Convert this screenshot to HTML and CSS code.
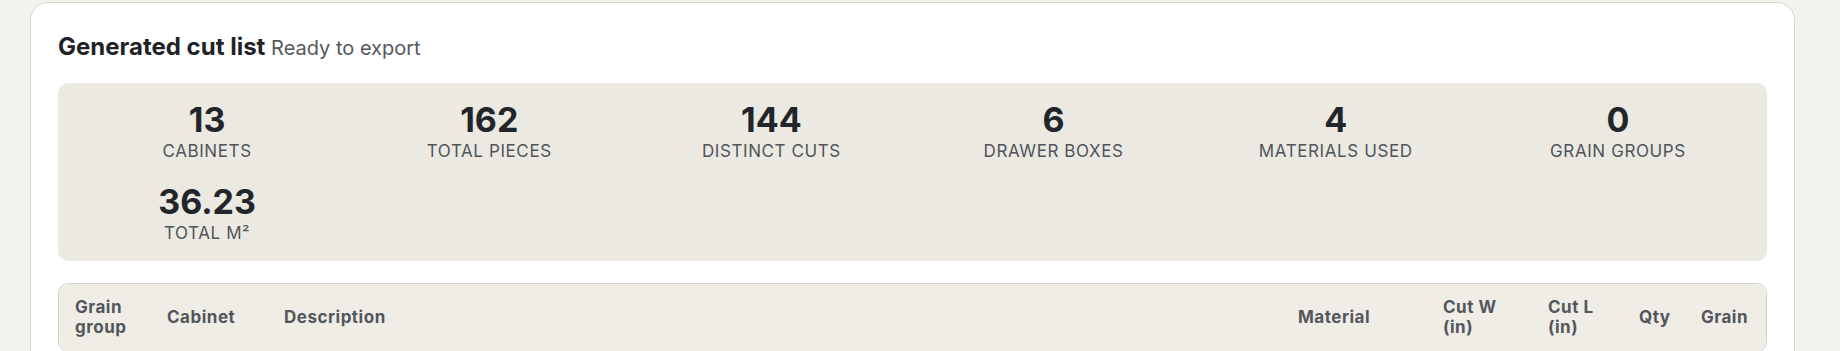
FILE: index.html
```html
<!DOCTYPE html>
<html lang="en">
<head>
    <meta charset="UTF-8">
    <meta name="viewport" content="width=device-width, initial-scale=1.0">
    <title>Cut List</title>
    <link rel="stylesheet" href="styles.css">
</head>
<body>
    <div class="page">
        <section class="card">
            <h2 class="card-title">Generated cut list <span class="subtitle">Ready to export</span></h2>

            <div class="stats">
                <div class="stat"><div class="stat-value">13</div><div class="stat-label">Cabinets</div></div>
                <div class="stat"><div class="stat-value">162</div><div class="stat-label">Total pieces</div></div>
                <div class="stat"><div class="stat-value">144</div><div class="stat-label">Distinct cuts</div></div>
                <div class="stat"><div class="stat-value">6</div><div class="stat-label">Drawer boxes</div></div>
                <div class="stat"><div class="stat-value">4</div><div class="stat-label">Materials used</div></div>
                <div class="stat"><div class="stat-value">0</div><div class="stat-label">Grain groups</div></div>
                <div class="stat"><div class="stat-value">36.23</div><div class="stat-label">Total m²</div></div>
            </div>

            <div class="table-wrap">
                <table class="cut-table">
                    <colgroup>
                        <col class="c-group">
                        <col class="c-cab">
                        <col class="c-desc">
                        <col class="c-mat">
                        <col class="c-w">
                        <col class="c-l">
                        <col class="c-qty">
                        <col class="c-grain">
                    </colgroup>
                    <thead>
                        <tr>
                            <th>Grain group</th>
                            <th>Cabinet</th>
                            <th>Description</th>
                            <th>Material</th>
                            <th>Cut W (in)</th>
                            <th>Cut L (in)</th>
                            <th>Qty</th>
                            <th>Grain</th>
                        </tr>
                    </thead>
                    <tbody></tbody>
                </table>
            </div>
        </section>
    </div>
</body>
</html>
```

FILE: styles.css
```css
body {
    margin: 0;
    background: #f3f2ed;
    font-family: Inter, "Noto Sans", sans-serif;
    color: #1f2328;
}

.page {
    padding: 2px 45px 0 30px;
}

.card {
    background: #fff;
    border: 1px solid #d9d6cc;
    border-radius: 18px;
    padding: 30px 27px 27px;
}

.card-title {
    margin: 0 0 21px;
    font-size: 24px;
    line-height: 1.2;
    font-weight: 700;
    color: #1f2328;
}

.subtitle {
    font-size: 20px;
    font-weight: 400;
    color: #54585e;
}

/* Stats */
.stats {
    display: grid;
    grid-template-columns: repeat(6, 1fr);
    gap: 21px 16px;
    padding: 18px 16px 18px;
    background: #ebe9e1;
    border-radius: 10px;
    margin-bottom: 22px;
}

.stat {
    text-align: center;
}

.stat-value {
    font-size: 34px;
    line-height: 1.1;
    font-weight: 700;
    color: #22262b;
}

.stat-label {
    margin-top: 3px;
    font-size: 17px;
    line-height: 1.2;
    letter-spacing: 0.035em;
    text-transform: uppercase;
    color: #50555b;
}

/* Table */
.table-wrap {
    border: 1px solid #d4d1c7;
    border-radius: 10px;
    overflow: hidden;
}

.cut-table {
    width: 100%;
    border-collapse: collapse;
    table-layout: fixed;
}

.cut-table th {
    background: #efede6;
    padding: 14px 16px;
    text-align: left;
    vertical-align: middle;
    font-size: 17px;
    line-height: 1.15;
    font-weight: 700;
    letter-spacing: 0.03em;
    color: #53575c;
}

.c-group { width: 92px; }
.c-cab { width: 117px; }
.c-mat { width: 145px; }
.c-w { width: 105px; }
.c-l { width: 91px; }
.c-qty { width: 62px; }
.c-grain { width: 81px; }
```
